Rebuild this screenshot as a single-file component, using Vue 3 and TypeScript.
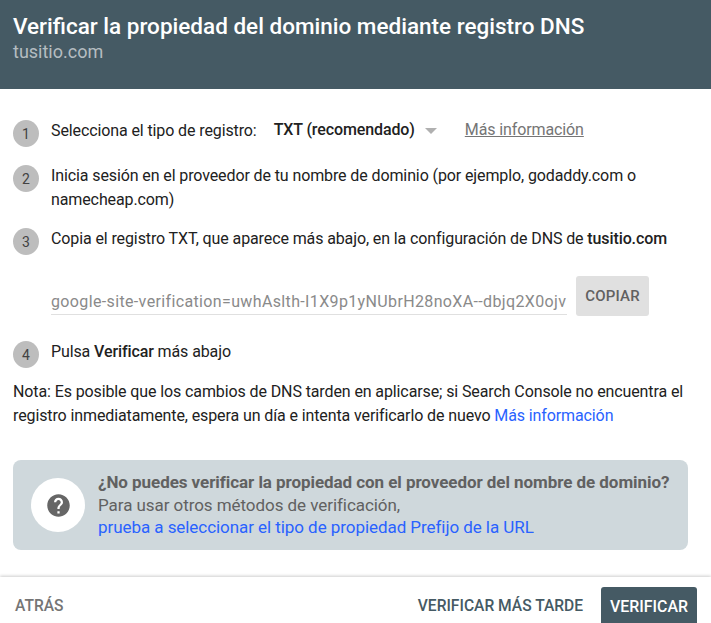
<script setup lang="ts">
const token = 'google-site-verification=uwhAslth-I1X9p1yNUbrH28noXA--dbjq2X0ojv'
</script>

<template>
  <div class="dialog">
    <header class="head">
      <h1 class="title">Verificar la propiedad del dominio mediante registro DNS</h1>
      <div class="domain">tusitio.com</div>
    </header>

    <main class="body">
      <div class="step step-1">
        <span class="num">1</span>
        <span class="label">Selecciona el tipo de registro:</span>
        <span class="select">TXT (recomendado)<i class="caret"></i></span>
        <a class="more">Más información</a>
      </div>
      <div class="step step-2">
        <span class="num">2</span>
        <p class="text">Inicia sesión en el proveedor de tu nombre de dominio (por ejemplo, godaddy.com o namecheap.com)</p>
      </div>
      <div class="step step-3">
        <span class="num">3</span>
        <p class="text">Copia el registro TXT, que aparece más abajo, en la configuración de DNS de <b>tusitio.com</b></p>
      </div>
      <div class="copy-row">
        <div class="token">{{ token }}</div>
        <button class="copy">COPIAR</button>
      </div>
      <div class="step step-4">
        <span class="num">4</span>
        <p class="text">Pulsa <b>Verificar</b> más abajo</p>
      </div>
      <p class="note">Nota: Es posible que los cambios de DNS tarden en aplicarse; si Search Console no encuentra el registro inmediatamente, espera un día e intenta verificarlo de nuevo <a class="link">Más información</a></p>

      <section class="help">
        <span class="help-icon">
          <svg viewBox="0 0 24 24" width="27" height="27">
            <path fill="#666666" d="M12 2C6.48 2 2 6.48 2 12s4.48 10 10 10 10-4.48 10-10S17.52 2 12 2zm1 17h-2v-2h2v2zm2.07-7.75l-.9.92C13.45 12.9 13 13.5 13 15h-2v-.5c0-1.1.45-2.1 1.17-2.83l1.24-1.26c.37-.36.59-.86.59-1.41 0-1.1-.9-2-2-2s-2 .9-2 2H8c0-2.21 1.79-4 4-4s4 1.79 4 4c0 .88-.36 1.68-.93 2.25z"/>
          </svg>
        </span>
        <div class="help-text">
          <strong>¿No puedes verificar la propiedad con el proveedor del nombre de dominio?</strong>
          <span>Para usar otros métodos de verificación,</span>
          <a class="link">prueba a seleccionar el tipo de propiedad Prefijo de la URL</a>
        </div>
      </section>
    </main>

    <footer class="foot">
      <button class="btn back">ATRÁS</button>
      <div class="foot-right">
        <button class="btn later">VERIFICAR MÁS TARDE</button>
        <button class="btn verify">VERIFICAR</button>
      </div>
    </footer>
  </div>
</template>

<style>
html, body { margin: 0; background: #fff; }
</style>

<style scoped>
.dialog {
  width: 711px;
  height: 623px;
  overflow: hidden;
  display: flex;
  flex-direction: column;
  font-family: Roboto, "Liberation Sans", sans-serif;
  font-size: 16px;
  line-height: 24px;
  letter-spacing: -0.11px;
  color: #212121;
}
.head {
  height: 89px;
  box-sizing: border-box;
  background: #455a64;
  padding: 12px 13px 0;
  flex: none;
}
.title {
  margin: 0;
  font-size: 22.5px;
  line-height: 28px;
  font-weight: 500;
  letter-spacing: 0;
  color: #fff;
}
.domain {
  font-size: 18px;
  line-height: 24px;
  letter-spacing: 0;
  color: #b5bdc1;
}
.body {
  flex: 1;
  padding: 31px 13px 0;
  min-height: 0;
}
.step {
  display: flex;
  align-items: flex-start;
}
.num {
  flex: none;
  width: 26px;
  height: 27px;
  margin-top: 1px;
  margin-right: 12px;
  border-radius: 50%;
  background: #bdbdbd;
  display: flex;
  align-items: center;
  justify-content: center;
  font-size: 14px;
  color: #424242;
  padding-top: 1px;
  box-sizing: border-box;
}
.text { margin: 0; }
b { font-weight: 500; }
.step-1 { height: 28px; }
.step-1 .num { margin-top: 0; }
.label { margin-right: 17px; margin-top: -1px; }
.select {
  font-weight: 500;
  display: inline-flex;
  align-items: center;
  margin-top: -2px;
}
.caret {
  width: 0;
  height: 0;
  border-left: 6px solid transparent;
  border-right: 6px solid transparent;
  border-top: 6px solid #b0b0b0;
  margin-left: 10px;
  margin-top: 2px;
}
.more {
  margin-left: 28px;
  margin-top: -2px;
  color: #757575;
  text-decoration: underline;
}
.step-2 { margin-top: 16px; }
.step-3 { margin-top: 15px; }
.copy-row {
  display: flex;
  align-items: flex-start;
  margin-top: 21px;
  padding-left: 38px;
}
.token {
  width: 516px;
  height: 39px;
  box-sizing: border-box;
  padding-top: 14px;
  line-height: 23px;
  letter-spacing: 0.36px;
  overflow: hidden;
  white-space: nowrap;
  color: #8a8a8a;
  border-bottom: 1px solid #e0e0e0;
}
.copy {
  margin-left: 9px;
  width: 73px;
  height: 40px;
  border: 0;
  border-radius: 3px;
  background: #e0e0e0;
  color: #616161;
  font: 500 15px Roboto, sans-serif;
  letter-spacing: 0.2px;
  padding: 0;
}
.step-4 { margin-top: 24px; }
.note {
  margin: 12px 0 0;
  line-height: 23.5px;
  color: #212121;
}
.link { color: #2962ff; }
.help {
  margin-top: 33px;
  width: 675px;
  height: 90px;
  box-sizing: border-box;
  background: #cfd8dc;
  border-radius: 8px;
  padding: 0 18px;
  display: flex;
  align-items: center;
}
.help-icon {
  flex: none;
  width: 54px;
  height: 54px;
  border-radius: 50%;
  background: #fff;
  display: flex;
  align-items: center;
  justify-content: center;
  margin-right: 13px;
}
.help-text {
  display: flex;
  flex-direction: column;
  font-size: 17px;
  line-height: 22.5px;
  letter-spacing: -0.06px;
  color: #616161;
  white-space: nowrap;
}
.help-text strong { font-weight: 700; }
.foot {
  flex: none;
  height: 46px;
  box-shadow: 0 -1px 3px rgba(0, 0, 0, 0.2);
  display: flex;
  justify-content: space-between;
  align-items: flex-end;
  padding: 0 14px 0 7px;
  background: #fff;
}
.btn {
  border: 0;
  background: none;
  font: 500 15.6px Roboto, sans-serif;
  height: 36px;
  padding: 2px 8px 0;
  border-radius: 3px 3px 0 0;
}
.back { color: #757575; }
.foot-right { display: flex; align-items: flex-end; gap: 10px; }
.later { color: #455a64; }
.verify { background: #455a64; color: #fff; padding: 2px 9px 0; font-size: 15.9px; }
</style>
